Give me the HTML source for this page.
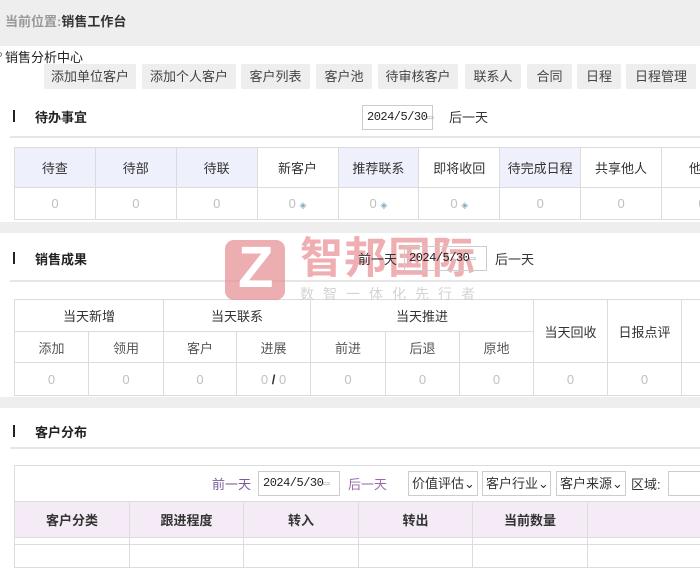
<!DOCTYPE html>
<html><head><meta charset="utf-8"><style>
*{margin:0;padding:0;box-sizing:border-box}
body{width:700px;height:540px;overflow:hidden;background:#fff;font-family:"Liberation Sans","Noto Sans CJK SC",sans-serif;font-size:13px;color:#333;position:relative}
.a{position:absolute}
.btn{position:absolute;top:64px;height:25px;background:#eeeeee;border-radius:2px;line-height:25px;text-align:center;font-size:13px;color:#444}
.bar{position:absolute;left:13px;width:2px;height:12px;background:#222}
.tt{position:absolute;left:35px;font-weight:bold;font-size:13px;color:#222}
.hl{position:absolute;left:10px;right:0;height:2px;background:#e6e6e6}
.band{position:absolute;left:0;right:0;background:#eeeeee}
table{position:absolute;border-collapse:collapse;table-layout:fixed}
td{border:1px solid #dcdcdc;text-align:center;font-size:13px;padding:0;overflow:hidden;white-space:nowrap}
.lv{background:#eef0fb}
.z{color:#c0c0c0}
.d{color:#8ab;font-size:9px}
.in{position:absolute;border:1px solid #ccc;background:#fff;font-family:"Liberation Mono","DejaVu Sans Mono",monospace;font-size:12px;line-height:23px;padding-left:4px;color:#222;letter-spacing:-0.5px}
.in i{font-style:normal;color:#aaa;font-size:10px}
.sel{position:absolute;top:471px;height:25px;border:1px solid #ccc;line-height:23px;padding-left:3px;font-size:13px;color:#333;background:#fff}
</style></head><body>
<div class="band" style="top:0;height:46px"></div>
<div class="a" style="left:5px;top:11px;font-size:13px;font-weight:bold;color:#999">当前位置:<span style="color:#333">销售工作台</span></div>
<div class="a" style="left:-3px;top:52px;width:5px;height:5px;border-radius:50%;border:1px solid #777"></div>
<div class="a" style="left:5px;top:47px;font-size:13px;color:#222">销售分析中心</div>
<div class="btn" style="left:44px;width:92px">添加单位客户</div>
<div class="btn" style="left:142px;width:94px">添加个人客户</div>
<div class="btn" style="left:241px;width:69px">客户列表</div>
<div class="btn" style="left:316px;width:56px">客户池</div>
<div class="btn" style="left:378px;width:80px">待审核客户</div>
<div class="btn" style="left:465px;width:56px">联系人</div>
<div class="btn" style="left:527px;width:45px">合同</div>
<div class="btn" style="left:577px;width:44px">日程</div>
<div class="btn" style="left:626px;width:70px">日程管理</div>

<div class="bar" style="top:110px"></div><div class="tt" style="top:107px">待办事宜</div>
<div class="in" style="left:362px;top:105px;width:71px;height:25px">2024/5/30<i>▭</i></div>
<div class="a" style="left:449px;top:107px">后一天</div>
<div class="hl" style="top:136px"></div>
<table style="left:14px;top:147px;width:729px">
<tr style="height:40px"><td class="lv">待查</td><td class="lv">待部</td><td class="lv">待联</td><td>新客户</td><td class="lv">推荐联系</td><td>即将收回</td><td class="lv">待完成日程</td><td>共享他人</td><td>他人</td></tr>
<tr style="height:32px"><td class="z">0</td><td class="z">0</td><td class="z">0</td><td class="z">0 <span class="d">◈</span></td><td class="z">0 <span class="d">◈</span></td><td class="z">0 <span class="d">◈</span></td><td class="z">0</td><td class="z">0</td><td class="z">0</td></tr>
</table>
<div class="band" style="top:222px;height:11px"></div>

<div class="bar" style="top:252px"></div><div class="tt" style="top:249px">销售成果</div>
<div class="hl" style="top:280px"></div>
<table style="left:14px;top:299px;width:740px">
<colgroup><col style="width:74px"><col style="width:75px"><col style="width:73px"><col style="width:74px"><col style="width:75px"><col style="width:74px"><col style="width:74px"><col style="width:74px"><col style="width:74px"><col style="width:73px"></colgroup>
<tr style="height:32px"><td colspan="2">当天新增</td><td colspan="2">当天联系</td><td colspan="3">当天推进</td><td rowspan="2">当天回收</td><td rowspan="2">日报点评</td><td rowspan="2">当</td></tr>
<tr style="height:31px;color:#555"><td>添加</td><td>领用</td><td>客户</td><td>进展</td><td>前进</td><td>后退</td><td>原地</td></tr>
<tr style="height:33px"><td class="z">0</td><td class="z">0</td><td class="z">0</td><td class="z">0 <b style="color:#333">/</b> 0</td><td class="z">0</td><td class="z">0</td><td class="z">0</td><td class="z">0</td><td class="z">0</td><td class="z">0</td></tr>
</table>
<!-- watermark -->
<div class="a" style="left:225px;top:240px;width:60px;height:60px;border-radius:9px;background:rgba(230,140,145,0.7)"></div>
<div class="a" style="left:238px;top:236px;font-size:58px;font-weight:bold;color:#fff;font-family:'Liberation Sans',sans-serif;line-height:64px">Z</div>
<div class="a" style="left:300px;top:234px;font-size:43px;line-height:50px;font-weight:bold;color:rgba(232,140,145,0.7);letter-spacing:1px">智邦国际</div>
<div class="a" style="left:300px;top:284px;font-size:14px;color:rgba(200,200,200,0.8);letter-spacing:9px">数智一体化先行者</div>
<div class="a" style="left:358px;top:249px">前一天</div>
<div class="in" style="left:404px;top:246px;width:83px;height:25px;background:transparent">2024/5/30<i>▭</i></div>
<div class="a" style="left:495px;top:249px">后一天</div>
<div class="band" style="top:397px;height:11px"></div>

<div class="bar" style="top:425px"></div><div class="tt" style="top:422px">客户分布</div>
<div class="hl" style="top:447px"></div>
<div class="a" style="left:14px;top:465px;width:700px;height:80px;border:1px solid #dcdcdc"></div>
<div class="a" style="left:212px;top:474px;color:#7a5a9a">前一天</div>
<div class="in" style="left:258px;top:471px;width:82px;height:25px">2024/5/30<i>▭</i></div>
<div class="a" style="left:348px;top:474px;color:#9a6aa8">后一天</div>
<div class="sel" style="left:408px;width:70px">价值评估⌄</div>
<div class="sel" style="left:482px;width:69px">客户行业⌄</div>
<div class="sel" style="left:556px;width:70px">客户来源⌄</div>
<div class="a" style="left:631px;top:474px">区域:</div>
<div class="sel" style="left:668px;width:40px"></div>
<table style="left:14px;top:501px;width:700px">
<colgroup><col style="width:115px"><col style="width:114px"><col style="width:115px"><col style="width:114px"><col style="width:115px"><col style="width:127px"></colgroup>
<tr style="height:36px;background:#f4ebf6;font-weight:bold"><td>客户分类</td><td>跟进程度</td><td>转入</td><td>转出</td><td>当前数量</td><td></td></tr>
<tr style="height:30px"><td></td><td></td><td></td><td></td><td></td><td></td></tr>
</table>
</body></html>
